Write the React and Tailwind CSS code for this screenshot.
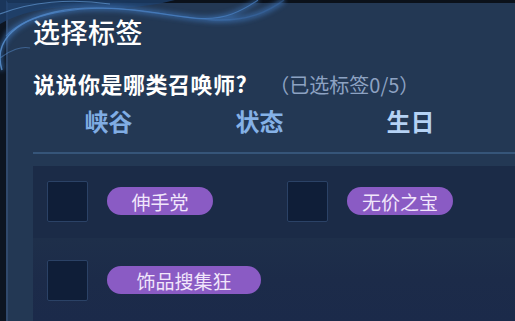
const font = { fontFamily: '"Noto Sans CJK SC", "Noto Sans", sans-serif' }

function Check() {
  return <div className="w-[41px] h-[41px] shrink-0 bg-[#0f1e38] border border-[#2b4266] rounded-[2px]" />
}

function Tag({ label, wide }) {
  return (
    <div className={`h-[28px] ${wide ? 'w-[154px]' : 'w-[106px]'} rounded-full bg-[#8a5bc4] text-[#f1e6fb] text-[19px] leading-none flex items-center justify-center`}>
      {label}
    </div>
  )
}

function Swirl() {
  return (
    <svg className="absolute top-0 left-0 pointer-events-none" width="300" height="75" viewBox="0 0 300 75">
      <defs>
        <linearGradient id="g1" x1="0" y1="0" x2="1" y2="0">
          <stop offset="0" stopColor="#5b95d6" stopOpacity="0.8" />
          <stop offset="1" stopColor="#3a6db0" stopOpacity="0.35" />
        </linearGradient>
        <filter id="blur" x="-10%" y="-50%" width="120%" height="200%">
          <feGaussianBlur stdDeviation="2.5" />
        </filter>
      </defs>
      <path d="M0,0 L175,0 C150,7 120,9 90,7 C50,5 20,12 0,24 Z" fill="#1f416f" opacity="0.75" />
      <g filter="url(#blur)" opacity="0.7">
        <path d="M2,70 C-6,45 10,22 55,12 C110,0 170,18 215,20 C248,21 268,12 284,0" fill="none" stroke="#3d74b8" strokeWidth="5" />
        <path d="M6,36 C25,14 80,4 135,10 C180,15 205,24 232,14 C245,9 252,4 258,0" fill="none" stroke="#3d74b8" strokeWidth="4" />
      </g>
      <path d="M2,70 C-6,45 10,22 55,12 C110,0 170,18 215,20 C248,21 268,12 284,0" fill="none" stroke="url(#g1)" strokeWidth="1.4" />
      <path d="M6,36 C25,14 80,4 135,10 C180,15 205,24 232,14 C245,9 252,4 258,0" fill="none" stroke="#4a82c4" strokeWidth="1.1" opacity="0.7" />
      <path d="M0,14 C30,2 70,-2 110,4" fill="none" stroke="#6aa3e0" strokeWidth="1.2" opacity="0.6" />
      <path d="M0,58 C10,50 22,46 30,48" fill="none" stroke="#5a8fd0" strokeWidth="1.1" opacity="0.5" />
    </svg>
  )
}

export default function App() {
  return (
    <div className="w-[515px] h-[321px] flex bg-[#0c121c] overflow-hidden relative" style={font}>
      <div className="w-[6px] shrink-0 bg-[#0d1521]" />
      <div className="flex-1 flex flex-col bg-[#233854] border-l-2 border-[#30496c] border-t-[3px] border-t-[#0b111a] border-r-2 border-r-[#2f4a6e] pl-[25px]">
        <h1 className="text-white text-[27px] leading-none font-medium mt-[15px] tracking-[0.5px]">选择标签</h1>
        <div className="flex items-baseline mt-[27px]">
          <span className="text-white text-[22px] leading-none font-bold tracking-[0.5px]">说说你是哪类召唤师?</span>
          <span className="text-[#8da2c2] text-[20px] leading-none ml-[22px]">（已选标签0/5）</span>
        </div>
        <div className="grid grid-cols-[151px_151px_151px] mt-[14px] text-[24px] leading-none font-bold">
          <div className="text-center text-[#80ade4]">峡谷</div>
          <div className="text-center text-[#85b1e6]">状态</div>
          <div className="text-center text-[#b5d2f4]">生日</div>
        </div>
        <div className="h-[2px] bg-[#365579] mt-[19px]" />
        <div className="flex-1 mt-[12px] bg-[#1b2b47] flex flex-col">
          <div className="grid grid-cols-[240px_240px] pl-[14px] pt-[15px] h-[72px]">
            <div className="flex items-start gap-[19px]">
              <Check />
              <div className="mt-[6px]"><Tag label="伸手党" /></div>
            </div>
            <div className="flex items-start gap-[19px]">
              <Check />
              <div className="mt-[6px]"><Tag label="无价之宝" /></div>
            </div>
          </div>
          <div className="flex-1 bg-gradient-to-b from-[#1e2f4a] via-[#1c2b49] to-[#1b2a4a] pl-[14px] pt-[22px]">
            <div className="flex items-start gap-[19px]">
              <Check />
              <div className="mt-[6px]"><Tag label="饰品搜集狂" wide /></div>
            </div>
          </div>
        </div>
      </div>
      <Swirl />
    </div>
  )
}
